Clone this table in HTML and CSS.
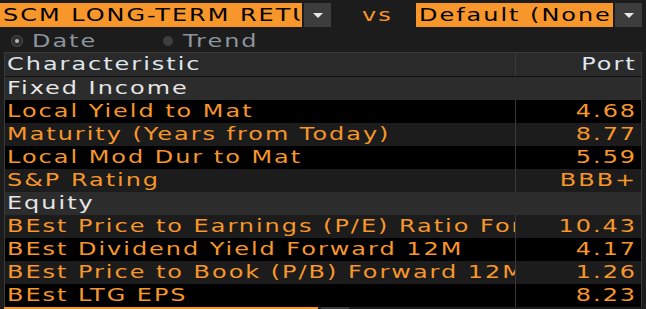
FILE: index.html
```html
<!DOCTYPE html>
<html>
<head>
<meta charset="utf-8">
<link rel="stylesheet" href="styles.css">
</head>
<body>
<div class="app">
  <div class="topbar">
    <div class="select sel1"><span class="t">SCM LONG-TERM RETURN</span></div>
    <div class="drop"><span class="tri"></span></div>
    <div class="vs"><span class="t">vs</span></div>
    <div class="select sel2"><span class="t">Default (None)</span></div>
    <div class="drop"><span class="tri"></span></div>
  </div>
  <div class="radios">
    <label class="radio"><span class="dot on"></span><span class="t">Date</span></label>
    <label class="radio r2"><span class="dot"></span><span class="t">Trend</span></label>
  </div>
  <div class="grid">
    <div class="row head"><div class="c1"><span class="t">Characteristic</span></div><div class="c2"><span class="t">Port</span></div></div>
    <div class="row sect"><div class="c1"><span class="t">Fixed Income</span></div></div>
    <div class="row dk"><div class="c1"><span class="t">Local Yield to Mat</span></div><div class="c2"><span class="t">4.68</span></div></div>
    <div class="row gy"><div class="c1"><span class="t">Maturity (Years from Today)</span></div><div class="c2"><span class="t">8.77</span></div></div>
    <div class="row dk"><div class="c1"><span class="t">Local Mod Dur to Mat</span></div><div class="c2"><span class="t">5.59</span></div></div>
    <div class="row gy"><div class="c1"><span class="t">S&amp;P Rating</span></div><div class="c2"><span class="t">BBB+</span></div></div>
    <div class="row sect"><div class="c1"><span class="t">Equity</span></div></div>
    <div class="row gy"><div class="c1"><span class="t">BEst Price to Earnings (P/E) Ratio Forward 12M</span></div><div class="c2"><span class="t">10.43</span></div></div>
    <div class="row dk"><div class="c1"><span class="t">BEst Dividend Yield Forward 12M</span></div><div class="c2"><span class="t">4.17</span></div></div>
    <div class="row gy"><div class="c1"><span class="t">BEst Price to Book (P/B) Forward 12M</span></div><div class="c2"><span class="t">1.26</span></div></div>
    <div class="row dk"><div class="c1"><span class="t">BEst LTG EPS</span></div><div class="c2"><span class="t">8.23</span></div></div>
  </div>
  <div class="hscroll"><div class="thumb"></div><div class="track"></div></div>
</div>
</body>
</html>
```
FILE: styles.css
```css
html, body {
  margin: 0;
  padding: 0;
  background: #1c1c1c;
  width: 646px;
  height: 309px;
  overflow: hidden;
}
.app {
  font-family: "DejaVu Sans", sans-serif;
  font-size: 18px;
  letter-spacing: 1.5px;
}
.t {
  display: inline-block;
  white-space: nowrap;
  vertical-align: top;
  transform: scaleX(1.33);
  transform-origin: left center;
}
.topbar {
  display: flex;
  align-items: center;
  height: 30px;
}
.select {
  background: #f7962a;
  color: #000;
  height: 24px;
  line-height: 24px;
  overflow: hidden;
  white-space: nowrap;
}
.sel1 { width: 299px; padding-left: 3px; }
.sel2 { width: 194px; padding-left: 3px; }
.sel1 .t { max-width: 223px; overflow: hidden; }
.sel2 .t { max-width: 144px; overflow: hidden; }
.drop {
  width: 27px;
  height: 24px;
  background: #3d3d3d;
  margin-left: 2px;
  display: flex;
  align-items: center;
  justify-content: center;
}
.tri {
  width: 0;
  height: 0;
  border-left: 5px solid transparent;
  border-right: 5px solid transparent;
  border-top: 5px solid #e8e8e8;
}
.vs {
  color: #f7962a;
  width: 85px;
  padding-left: 31px;
  box-sizing: border-box;
  line-height: 24px;
}
.radios {
  display: flex;
  align-items: center;
  height: 22px;
  line-height: 22px;
  color: #8c949c;
}
.radio {
  display: flex;
  align-items: center;
}
.r2 { margin-left: 70px; }
.dot {
  width: 10px;
  height: 10px;
  border-radius: 50%;
  background: #3e3e3e;
  margin-left: 12px;
  margin-right: 10px;
  position: relative;
}
.dot.on { background: #2e2e2e; box-shadow: 0 0 0 1px #4a4a4a; }
.dot.on::after {
  content: "";
  position: absolute;
  left: 3px;
  top: 3px;
  width: 4px;
  height: 4px;
  border-radius: 50%;
  background: #b8b8b8;
}
.grid {
  margin-left: 4px;
  width: 636px;
  border-left: 1px solid #3a3a3a;
  border-right: 1px solid #3a3a3a;
  border-top: 1px solid #3a3a3a;
}
.row {
  display: flex;
  height: 23px;
  line-height: 22px;
  color: #f7962a;
}
.c1 {
  width: 508px;
  padding-left: 2px;
  white-space: nowrap;
  overflow: hidden;
  border-right: 1px solid #3a3a3a;
}
.c1 .t { max-width: 382px; overflow: hidden; }
.c2 {
  flex: 1;
  text-align: right;
  padding-right: 4px;
}
.c2 .t { transform-origin: right center; }
.head { background: #2a2a2a; color: #dfe6ee; border-bottom: 1px solid #111; }
.sect { background: #2c2c2c; color: #e6e6e6; }
.sect .c1 { border-right: none; }
.dk { background: #000; }
.gy { background: #1c1c1c; }
.hscroll {
  display: flex;
  margin-left: 4px;
  height: 6px;
}
.thumb { width: 314px; background: #f7962a; }
.track { width: 28px; margin-left: 3px; background: #3a3a3a; }
```
